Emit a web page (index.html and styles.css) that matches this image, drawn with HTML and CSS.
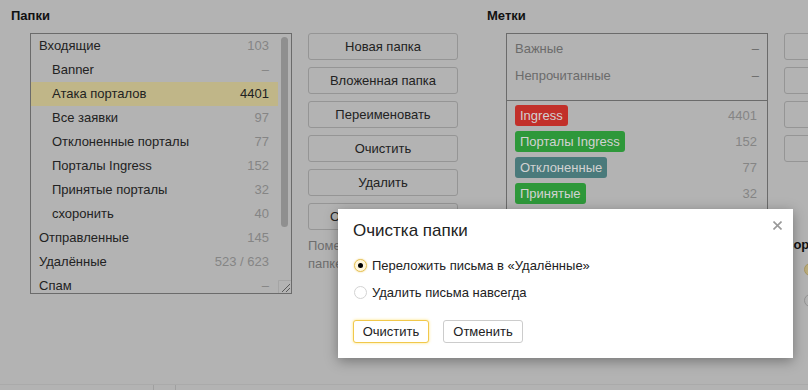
FILE: index.html
```html
<!DOCTYPE html>
<html lang="ru">
<head>
    <meta charset="UTF-8">
    <title>Папки и метки</title>
    <link rel="stylesheet" href="styles.css">
</head>
<body>
<div class="page">
    <!-- папки -->
    <section class="group">
        <h2 class="group-title">Папки</h2>
        <div class="group-body">
            <div class="listbox">
                <ul class="folder-list">
                    <li class="row"><span>Входящие</span><span class="count">103</span></li>
                    <li class="row sub"><span>Banner</span><span class="count">–</span></li>
                    <li class="row sub current"><span>Атака порталов</span><span class="count">4401</span></li>
                    <li class="row sub"><span>Все заявки</span><span class="count">97</span></li>
                    <li class="row sub"><span>Отклоненные порталы</span><span class="count">77</span></li>
                    <li class="row sub"><span>Порталы Ingress</span><span class="count">152</span></li>
                    <li class="row sub"><span>Принятые порталы</span><span class="count">32</span></li>
                    <li class="row sub"><span>схоронить</span><span class="count">40</span></li>
                    <li class="row"><span>Отправленные</span><span class="count">145</span></li>
                    <li class="row"><span>Удалённые</span><span class="count">523 / 623</span></li>
                    <li class="row"><span>Спам</span><span class="count">–</span></li>
                </ul>
                <div class="scroll"><div class="thumb"></div></div>
                <svg class="grip" width="13" height="13" viewBox="0 0 13 13">
                    <path d="M0.5 13V0.5H13" fill="none" stroke="#a5a5a5"/>
                    <path d="M4 12L12 4M8 12L12 8" stroke="#5a5a5a" stroke-width="1"/>
                </svg>
            </div>
            <div class="actions">
                <button class="btn">Новая папка</button>
                <button class="btn">Вложенная папка</button>
                <button class="btn">Переименовать</button>
                <button class="btn">Очистить</button>
                <button class="btn">Удалить</button>
                <button class="btn">Обработка писем</button>
                <p class="hint">Пометить все письма в папке как прочитанные</p>
            </div>
        </div>
    </section>

    <!-- метки -->
    <section class="group">
        <h2 class="group-title">Метки</h2>
        <div class="group-body">
            <div class="listbox labels">
                <ul class="sys-list">
                    <li class="sys-row"><span>Важные</span><span>–</span></li>
                    <li class="sys-row"><span>Непрочитанные</span><span>–</span></li>
                </ul>
                <ul class="label-list">
                    <li class="label-row"><span class="badge red">Ingress</span><span class="count">4401</span></li>
                    <li class="label-row"><span class="badge green">Порталы Ingress</span><span class="count">152</span></li>
                    <li class="label-row"><span class="badge teal">Отклоненные</span><span class="count">77</span></li>
                    <li class="label-row"><span class="badge green">Принятые</span><span class="count">32</span></li>
                </ul>
            </div>
            <div class="actions">
                <button class="btn">Новая метка</button>
                <button class="btn">Изменить</button>
                <button class="btn">Удалить</button>
                <button class="btn">Снять все метки</button>
                <h3 class="side-title">Сортировка</h3>
                <label class="side-option"><span class="radio checked"></span>по дате</label>
                <label class="side-option"><span class="radio"></span>по имени</label>
            </div>
        </div>
    </section>
</div>

<footer class="footer">
    <span class="sep sep-a"></span>
    <span class="sep sep-b"></span>
</footer>

<!-- диалог поверх страницы -->
<div class="modal">
    <h2 class="modal-title">Очистка папки</h2>
    <svg class="close" width="9" height="9" viewBox="0 0 9 9">
        <path d="M0.5 0.5L8.5 8.5M8.5 0.5L0.5 8.5" stroke="#999" stroke-width="1.6"/>
    </svg>
    <div class="options">
        <label class="option"><span class="radio checked"></span>Переложить письма в «Удалённые»</label>
        <label class="option"><span class="radio"></span>Удалить письма навсегда</label>
    </div>
    <div class="modal-buttons">
        <button class="mbtn action">Очистить</button>
        <button class="mbtn cancel">Отменить</button>
    </div>
</div>
</body>
</html>
```

FILE: styles.css
```css
* {
    margin: 0;
    padding: 0;
    box-sizing: border-box;
}

body {
    position: relative;
    width: 808px;
    height: 390px;
    overflow: hidden;
    background-color: #b3b3b3;
    font: 13px "Liberation Sans", Arial, sans-serif;
    color: #222;
}

ul {
    list-style: none;
}

/* колонки */
.page {
    display: flex;
    height: 384px;
    padding-left: 11px;
}

.group {
    flex: none;
    width: 476px;
}

.group-title {
    font-size: 13px;
    line-height: 16px;
    font-weight: bold;
    color: #111;
    padding-top: 8px;
    margin-bottom: 9px;
}

.group-body {
    display: flex;
    gap: 16px;
    margin-left: 19px;
}

/* список папок */
.listbox {
    position: relative;
    display: flex;
    flex: none;
    width: 262px;
    height: 261px;
    border: 1px solid #6b6b6b;
    overflow: hidden;
}

.folder-list {
    width: 247px;
}

.row {
    display: flex;
    justify-content: space-between;
    height: 24px;
    line-height: 24px;
    padding: 0 9px 0 8px;
    white-space: nowrap;
}

.row.sub {
    padding-left: 21px;
}

.row.current {
    background-color: #c0b688;
}

.count {
    color: #858585;
}

.row.current .count {
    color: #222;
}

.scroll {
    width: 13px;
    padding: 3px 0 0 3px;
}

.thumb {
    width: 7px;
    height: 190px;
    border-radius: 4px;
    background-color: #8f8f8f;
}

.grip {
    position: absolute;
    right: 0;
    bottom: 0;
}

/* кнопки */
.actions {
    flex: none;
    width: 150px;
}

.btn {
    display: block;
    width: 150px;
    height: 27px;
    margin-bottom: 7px;
    border: 1px solid #959595;
    border-radius: 3px;
    background: transparent;
    font: inherit;
    color: #222;
    white-space: nowrap;
    overflow: hidden;
}

.hint {
    margin-top: 4px;
    line-height: 18px;
    color: #6e6e6e;
}

/* метки */
.labels {
    flex-direction: column;
}

.sys-list {
    padding: 1px 0 11px;
    border-bottom: 1px solid #6b6b6b;
}

.sys-row {
    display: flex;
    justify-content: space-between;
    height: 27px;
    line-height: 27px;
    padding: 0 8px;
    color: #6b6b6b;
}

.label-list {
    padding-top: 1px;
}

.label-row {
    display: flex;
    justify-content: space-between;
    align-items: center;
    height: 26px;
    padding: 0 10px 0 8px;
}

.badge {
    height: 21px;
    line-height: 21px;
    padding: 0 5px;
    border-radius: 3px;
    color: #d2d2d2;
}

.red {
    background-color: #c2302a;
}

.green {
    background-color: #2e983a;
}

.teal {
    background-color: #4a7a7b;
}

.side-title {
    font-size: 13px;
    line-height: 16px;
    font-weight: bold;
    color: #111;
    margin: 75px 0 1px;
}

.side-option {
    display: flex;
    align-items: center;
    height: 31px;
    padding-left: 19px;
}

/* подвал */
.footer {
    position: relative;
    height: 6px;
    border-top: 1px solid #aaaaaa;
}

.sep {
    position: absolute;
    top: 0;
    width: 1px;
    height: 5px;
    background-color: #a0a0a0;
}

.sep-a {
    left: 153px;
}

.sep-b {
    left: 175px;
}

/* радио */
.radio {
    flex: none;
    position: relative;
    width: 13px;
    height: 13px;
    margin: 0 5px 0 1px;
    border: 1px solid #d3d3d3;
    border-radius: 50%;
    background-color: #fff;
}

.radio.checked {
    border-color: #e6c25a;
    background-color: #fff7dc;
    box-shadow: 0 0 2px rgba(230, 180, 40, .6);
}

.radio.checked::after {
    content: "";
    position: absolute;
    left: 3px;
    top: 3px;
    width: 5px;
    height: 5px;
    border-radius: 50%;
    background-color: #000;
}

.side-option .radio {
    border-color: #939393;
    background-color: #b3b3b3;
    box-shadow: none;
}

.side-option .radio.checked {
    border-color: #a89660;
    background-color: #b8ab7c;
}

/* диалог */
.modal {
    position: absolute;
    left: 338px;
    top: 209px;
    width: 455px;
    padding: 11px 15px 15px;
    background-color: #fff;
    box-shadow: 0 3px 12px rgba(0, 0, 0, .35);
}

.modal-title {
    font-size: 17px;
    line-height: 22px;
    font-weight: normal;
    color: #222;
}

.close {
    position: absolute;
    top: 12px;
    right: 11px;
}

.options {
    margin-top: 10px;
}

.option {
    display: flex;
    align-items: center;
    height: 27px;
}

.modal-buttons {
    display: flex;
    gap: 14px;
    margin-top: 14px;
}

.mbtn {
    height: 23px;
    border: 1px solid #ccc;
    border-radius: 3px;
    background-color: #fff;
    font: inherit;
    color: #222;
}

.mbtn.action {
    width: 76px;
    border-color: #f1c84b;
    box-shadow: 0 0 3px rgba(255, 204, 0, .55);
}

.mbtn.cancel {
    width: 80px;
}
```
